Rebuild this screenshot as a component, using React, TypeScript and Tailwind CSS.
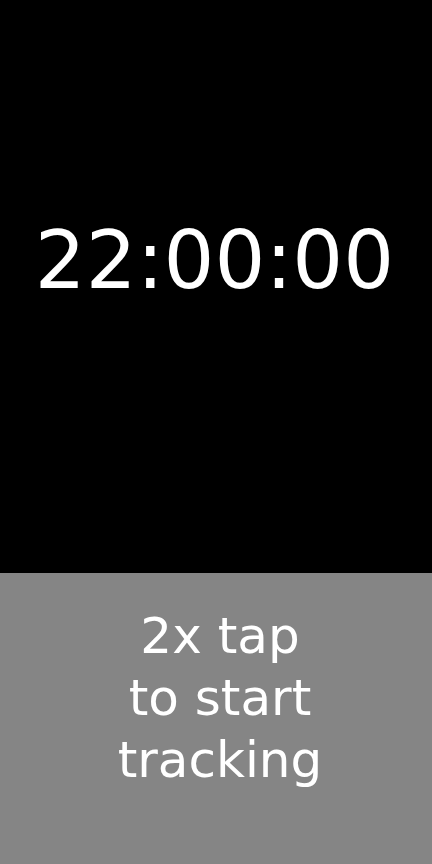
export default function App() {
  return (
    <div
      className="flex h-[864px] w-full flex-col bg-black text-white"
      style={{ fontFamily: '"DejaVu Sans", sans-serif' }}
    >
      <div className="flex h-[573px] shrink-0 justify-center pt-[214px] pr-[3px]">
        <div className="text-[80px] leading-[93px]">22:00:00</div>
      </div>
      <div className="flex flex-1 flex-col items-center bg-[#858585] pt-[32px] pl-[8px]">
        <div className="text-center text-[50px] leading-[62px]">
          2x tap
          <br />
          to start
          <br />
          tracking
        </div>
      </div>
    </div>
  );
}
